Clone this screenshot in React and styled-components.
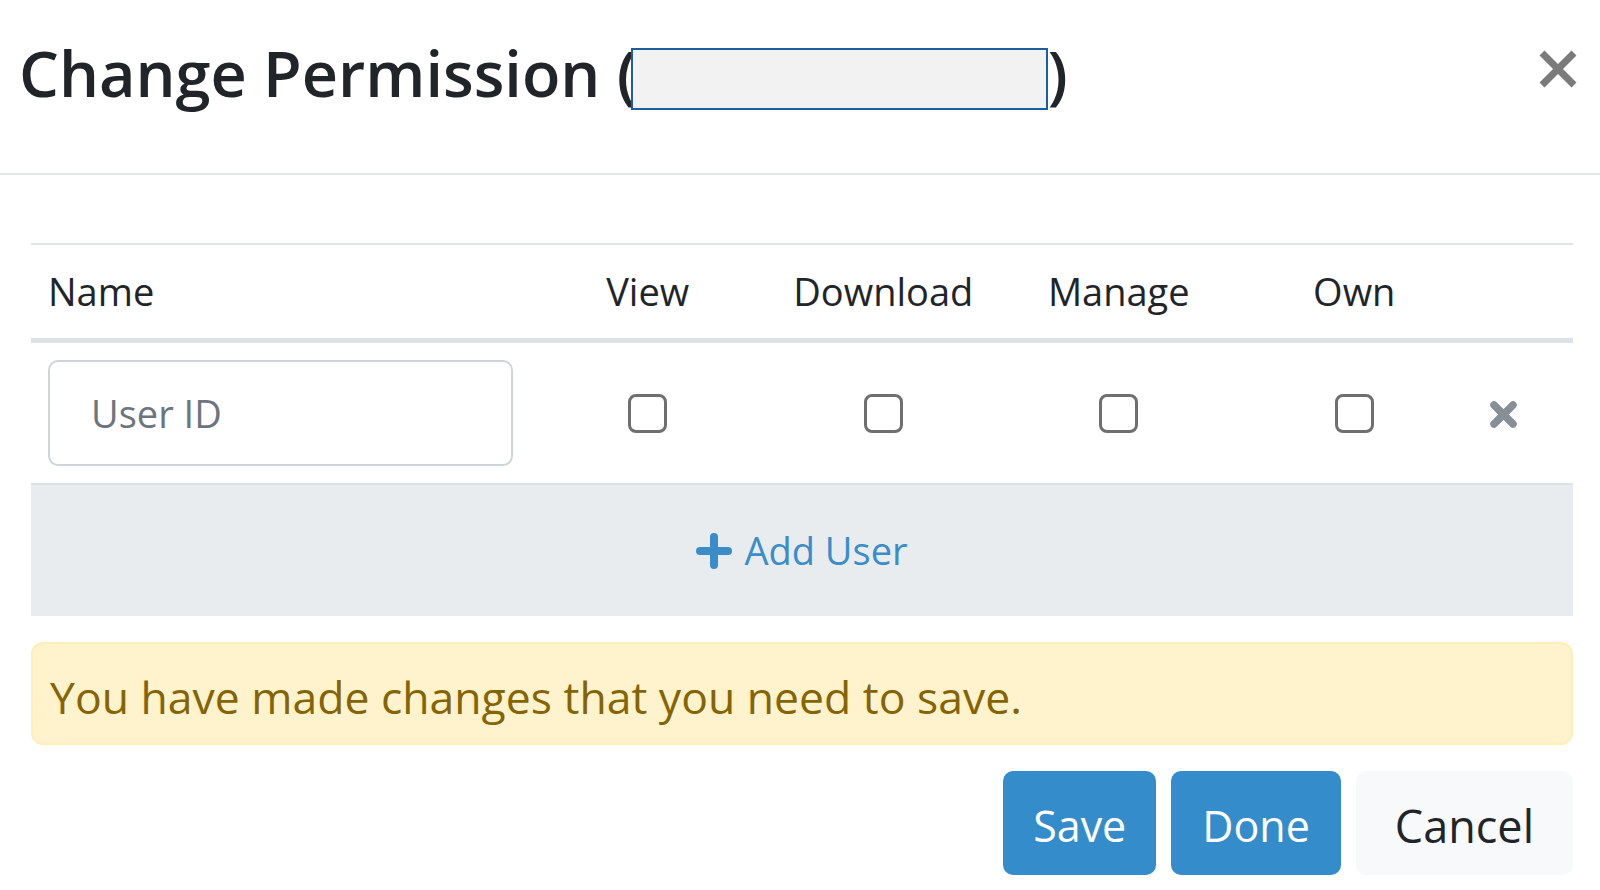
import React from 'react';
import styled, { createGlobalStyle } from 'styled-components';

const GlobalStyle = createGlobalStyle`
  html, body { margin: 0; padding: 0; background: #fff; }
  body { font-family: "Open Sans", "Noto Sans", "Liberation Sans", sans-serif; color: #212529; }
  * { box-sizing: border-box; }
`

const Modal = styled.div`
  width: 1600px;
  height: 890px;
  background: #fff;
  overflow: hidden;
`

const Header = styled.div`
  display: flex;
  align-items: flex-start;
  justify-content: space-between;
  height: 175px;
  padding: 34px 23px 0 19px;
  border-bottom: 2px solid #e4e7ea;
`

const Title = styled.h5`
  display: flex;
  align-items: center;
  margin: 0;
  font-size: 63px;
  line-height: 77px;
  font-weight: 600;
  color: #212529;
  white-space: pre;
`

const Redacted = styled.span`
  display: inline-block;
  width: 417px;
  height: 62px;
  margin: 12px 0 0 -6px;
  background: #f2f2f2;
  border: 2px solid #1d5e9c;
`

const CloseButton = styled.button`
  display: flex;
  border: none;
  background: none;
  padding: 0;
  margin-top: 16px;
  cursor: pointer;
`

const Body = styled.div`
  padding: 68px 27px 0 31px;
`

const Grid = styled.div`
  display: grid;
  grid-template-columns: 499px repeat(4, 235.5px) 1fr;
  align-items: center;
`

const HeadRow = styled(Grid)`
  height: 100px;
  border-top: 2px solid #e1e4e8;
  border-bottom: 5px solid #dee2e6;
`

const HeadCell = styled.div`
  font-size: 38px;
  line-height: 57px;
  padding-left: ${p => (p.left ? '17px' : '0')};
  text-align: ${p => (p.left ? 'left' : 'center')};
  color: #212529;
`

const UserRow = styled(Grid)`
  height: 142px;
  border-bottom: 2px solid #dee2e6;
`

const Cell = styled.div`
  display: flex;
  justify-content: ${p => (p.left ? 'flex-start' : 'center')};
  padding-left: ${p => (p.left ? '17px' : '0')};
`

const UserInput = styled.input`
  width: 465px;
  height: 106px;
  border: 2px solid #ced4da;
  border-radius: 10px;
  padding: 0 0 0 41px;
  font-family: inherit;
  font-size: 38px;
  color: #495057;
  outline: none;
  &::placeholder { color: #6c757d; }
`

const Check = styled.input`
  appearance: none;
  -webkit-appearance: none;
  width: 39px;
  height: 39px;
  margin: 0;
  border: 3px solid #6f6f6f;
  border-radius: 8px;
  background: #fff;
`

const RemoveButton = styled.button`
  display: flex;
  border: none;
  background: none;
  padding: 0;
  margin-top: 2px;
  cursor: pointer;
`

const AddRow = styled.div`
  display: flex;
  align-items: center;
  justify-content: center;
  gap: 12px;
  height: 131px;
  background: #e9ecef;
  color: #3a8dc9;
  font-size: 38px;
  line-height: 57px;
  cursor: pointer;
`

const Alert = styled.div`
  margin-top: 26px;
  padding: 23px 17px 16px;
  background: #fff3cd;
  border: 2px solid #ffeeba;
  border-radius: 12px;
  color: #856404;
  font-size: 44.5px;
  line-height: 60px;
`

const Footer = styled.div`
  display: flex;
  justify-content: flex-end;
  gap: 15px;
  margin-top: 26px;
`

const Button = styled.button`
  height: 104px;
  padding: 4px ${p => p.pad || 30}px 0;
  border: none;
  border-radius: 10px;
  font-family: inherit;
  font-size: ${p => (p.secondary ? '45px' : '43px')};
  background: ${p => (p.secondary ? '#f8f9fa' : '#358cca')};
  color: ${p => (p.secondary ? '#212529' : '#fff')};
  cursor: pointer;
`

const CloseIcon = () => (
  <svg width="38" height="38" viewBox="0 0 38 38">
    <path d="M3 3 L35 35 M35 3 L3 35" stroke="#7b7b7b" strokeWidth="7" fill="none" />
  </svg>
)

const TimesIcon = () => (
  <svg width="29" height="29" viewBox="0 0 29 29">
    <path d="M5 5 L24 24 M24 5 L5 24" stroke="#868e96" strokeWidth="7.5" strokeLinecap="round" fill="none" />
  </svg>
)

const PlusIcon = () => (
  <svg width="36" height="36" viewBox="0 0 36 36">
    <path d="M18 4 L18 32 M4 18 L32 18" stroke="#3a8dc9" strokeWidth="8" strokeLinecap="round" fill="none" />
  </svg>
)

const columns = ['View', 'Download', 'Manage', 'Own']

export default function App() {
  return (
    <Modal>
      <GlobalStyle />
      <Header>
        <Title>
          Change Permission (<Redacted />)
        </Title>
        <CloseButton aria-label="Close">
          <CloseIcon />
        </CloseButton>
      </Header>

      <Body>
        <HeadRow>
          <HeadCell left>Name</HeadCell>
          {columns.map(c => (
            <HeadCell key={c}>{c}</HeadCell>
          ))}
          <HeadCell />
        </HeadRow>

        <UserRow>
          <Cell left>
            <UserInput placeholder="User ID" />
          </Cell>
          {columns.map(c => (
            <Cell key={c}>
              <Check type="checkbox" aria-label={c} />
            </Cell>
          ))}
          <Cell left>
            <RemoveButton aria-label="Remove">
              <TimesIcon />
            </RemoveButton>
          </Cell>
        </UserRow>

        <AddRow>
          <PlusIcon />
          <span>Add User</span>
        </AddRow>

        <Alert>You have made changes that you need to save.</Alert>

        <Footer>
          <Button>Save</Button>
          <Button pad={31}>Done</Button>
          <Button secondary pad={39}>Cancel</Button>
        </Footer>
      </Body>
    </Modal>
  )
}
